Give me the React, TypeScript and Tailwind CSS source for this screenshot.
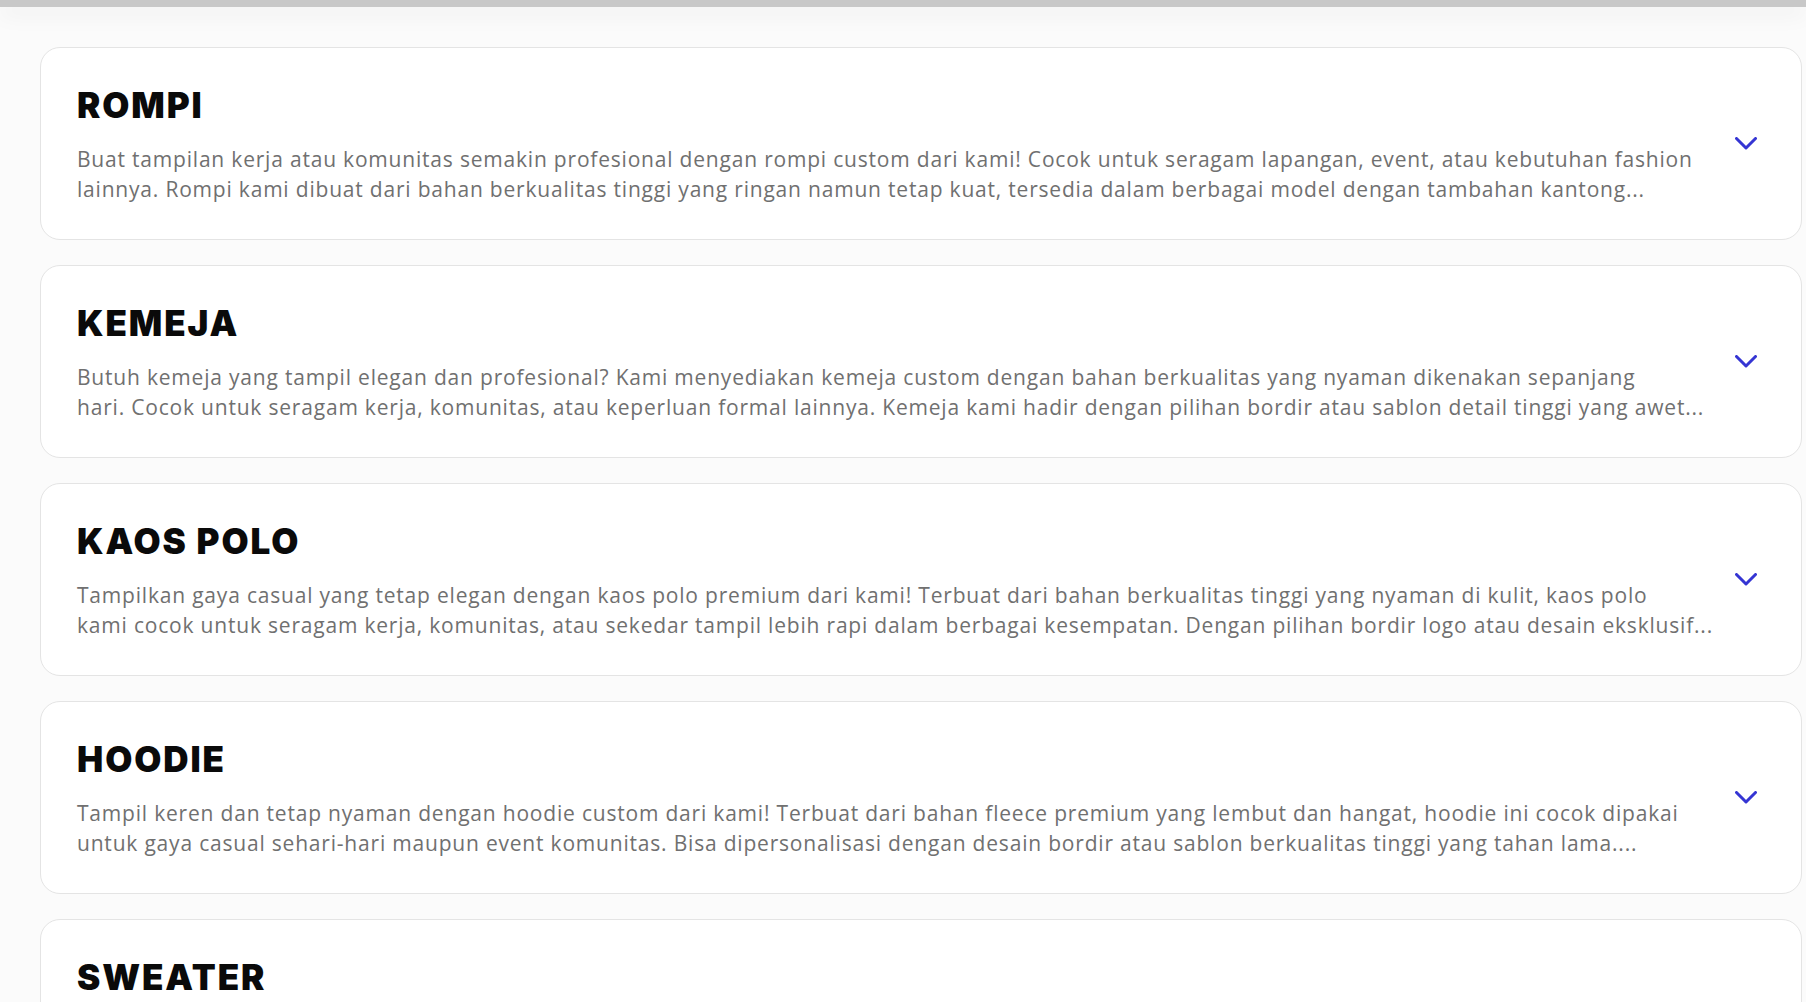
const products = [
  {
    title: "ROMPI",
    lines: [
      "Buat tampilan kerja atau komunitas semakin profesional dengan rompi custom dari kami! Cocok untuk seragam lapangan, event, atau kebutuhan fashion",
      "lainnya. Rompi kami dibuat dari bahan berkualitas tinggi yang ringan namun tetap kuat, tersedia dalam berbagai model dengan tambahan kantong...",
    ],
  },
  {
    title: "KEMEJA",
    lines: [
      "Butuh kemeja yang tampil elegan dan profesional? Kami menyediakan kemeja custom dengan bahan berkualitas yang nyaman dikenakan sepanjang",
      "hari. Cocok untuk seragam kerja, komunitas, atau keperluan formal lainnya. Kemeja kami hadir dengan pilihan bordir atau sablon detail tinggi yang awet...",
    ],
  },
  {
    title: "KAOS POLO",
    lines: [
      "Tampilkan gaya casual yang tetap elegan dengan kaos polo premium dari kami! Terbuat dari bahan berkualitas tinggi yang nyaman di kulit, kaos polo",
      "kami cocok untuk seragam kerja, komunitas, atau sekedar tampil lebih rapi dalam berbagai kesempatan. Dengan pilihan bordir logo atau desain eksklusif...",
    ],
  },
  {
    title: "HOODIE",
    lines: [
      "Tampil keren dan tetap nyaman dengan hoodie custom dari kami! Terbuat dari bahan fleece premium yang lembut dan hangat, hoodie ini cocok dipakai",
      "untuk gaya casual sehari-hari maupun event komunitas. Bisa dipersonalisasi dengan desain bordir atau sablon berkualitas tinggi yang tahan lama....",
    ],
  },
  {
    title: "SWEATER",
    lines: [
      "Hangat dan stylish di segala suasana dengan sweater custom dari kami! Dibuat dari bahan rajut dan fleece pilihan yang nyaman dipakai seharian",
      "untuk seragam komunitas, kampus, maupun kantor. Tersedia pilihan bordir maupun sablon dengan detail rapi yang tidak mudah luntur...",
    ],
  },
];

function Chevron() {
  return (
    <svg width="22" height="13" viewBox="0 0 22 13" fill="none" className="mb-[5px] shrink-0">
      <polyline
        points="1.5,1.5 11,11 20.5,1.5"
        stroke="#3535d3"
        strokeWidth="3"
        strokeLinecap="round"
        strokeLinejoin="round"
      />
    </svg>
  );
}

function ProductCard({ title, lines }: { title: string; lines: string[] }) {
  return (
    <div className="flex items-center justify-between rounded-[20px] border border-[#e4e4e4] bg-white pl-[36px] pr-[44px] pt-[40px] pb-[35px]">
      <div className="min-w-0">
        <h3 className="font-['Inter','Roboto',sans-serif] text-[35px] font-black leading-none tracking-[1.9px] text-[#0a0a0a]">
          {title}
        </h3>
        <p className="mt-[21px] font-['Open_Sans',sans-serif] text-[21px] leading-[30px] tracking-[0.8px] text-[#707070]">
          {lines.map((line, i) => (
            <span key={i} className="block whitespace-nowrap">
              {line}
            </span>
          ))}
        </p>
      </div>
      <Chevron />
    </div>
  );
}

export default function App() {
  return (
    <div className="min-h-screen overflow-hidden bg-[#fbfbfb]">
      <div className="relative z-10 h-[7px] bg-[#c8c8c8] shadow-[0_6px_22px_rgba(0,0,0,0.09)]" />
      <div className="ml-[40px] flex w-[1762px] flex-col gap-[25px] pt-[40px] pb-10">
        {products.map((p) => (
          <ProductCard key={p.title} title={p.title} lines={p.lines} />
        ))}
      </div>
    </div>
  );
}
